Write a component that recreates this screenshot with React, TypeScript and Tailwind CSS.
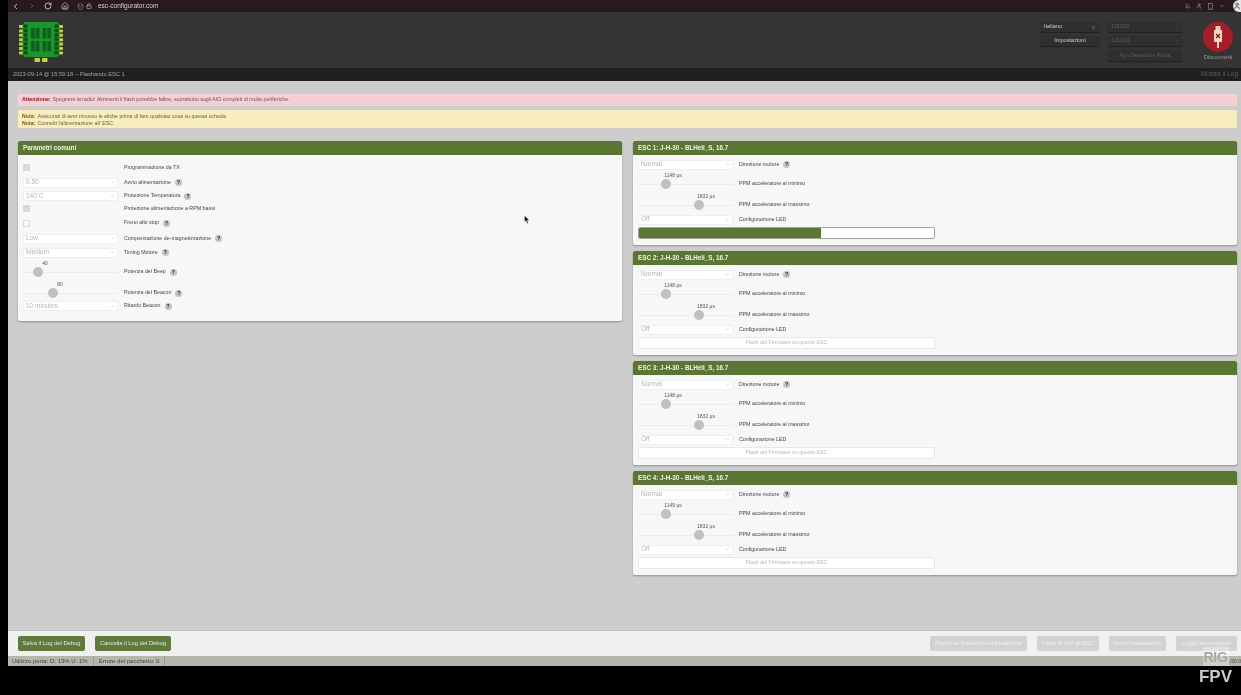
import { ChevronLeft, ChevronRight, RotateCw, Home, ShieldCheck, Lock, ChevronDown, ChevronsUpDown, User, Rss, Smartphone } from 'lucide-react';

function Help() {
  return (
    <span className="ml-[4px] inline-flex h-[7px] w-[7px] items-center justify-center rounded-full bg-[#c4c4c4] text-[5px] font-bold leading-none text-[#222]">?</span>
  );
}

function Select({ value }: { value: string }) {
  return (
    <div className="flex h-[10px] w-[95px] shrink-0 items-center justify-between rounded-[2px] border border-[#efefef] bg-white pl-[2px] pr-[2px] text-[6.5px] leading-none text-[#b5b5b5]">
      <span>{value}</span>
      <ChevronDown size={5} className="text-[#aaa]" />
    </div>
  );
}

function Check({ on }: { on: boolean }) {
  return (
    <div className="w-[95px] shrink-0">
      <div className={`flex h-[7px] w-[7px] items-center justify-center rounded-[1px] border border-[#dadada] ${on ? 'bg-[#d6d6d6]' : 'bg-[#f8f8f8]'}`}>
        {on && (
          <svg width="5" height="5" viewBox="0 0 5 5">
            <path d="M0.8 2.6 L2 3.8 L4.2 1.2" fill="none" stroke="#f2f2f2" strokeWidth="0.8" />
          </svg>
        )}
      </div>
    </div>
  );
}

function Row({ h, label, help, children }: { h: string; label: string; help?: boolean; children: React.ReactNode }) {
  return (
    <div className={`flex items-center gap-[6px] ${h}`}>
      {children}
      <span className="flex items-center whitespace-nowrap text-[5.3px] leading-none text-[#444]">
        {label}
        {help && <Help />}
      </span>
    </div>
  );
}

// slider with the value above the thumb
function Slider({ value, pos, label, help }: { value: string; pos: number; label: string; help?: boolean }) {
  return (
    <div className="flex h-[21px] gap-[6px]">
      <div className="w-[95px] shrink-0">
        <div className="relative h-[8px] text-[5px] leading-[9px] text-[#555]">
          <span className="absolute -translate-x-1/2 whitespace-nowrap" style={{ left: pos + 10 }}>{value}</span>
        </div>
        <div className="flex h-[10px] items-center">
          <div className="relative h-[1px] w-full bg-[#ececec]">
            <div className="absolute top-[-5px] h-[10px] w-[10px] rounded-full bg-[#c0c0c0]" style={{ left: pos - 2 }} />
          </div>
        </div>
      </div>
      <div className="flex h-[18px] items-end">
        <span className="flex h-[10px] items-center whitespace-nowrap text-[5.3px] leading-none text-[#444]">
          {label}
          {help && <Help />}
        </span>
      </div>
    </div>
  );
}

function Panel({ title, className, children }: { title: string; className?: string; children: React.ReactNode }) {
  return (
    <section className={`overflow-hidden rounded-[2px] bg-[#f7f7f7] shadow-[0_1px_2px_rgba(0,0,0,0.3)] ${className ?? ''}`}>
      <div className="flex h-[14px] items-center bg-[#597632] px-[5px] text-[6.3px] font-bold leading-none text-[#f2f2e8]">{title}</div>
      {children}
    </section>
  );
}

function EscPanel({ n, min, progress }: { n: number; min: string; progress?: boolean }) {
  return (
    <Panel title={`ESC ${n}: J-H-30 - BLHeli_S, 16.7`} className="h-[104px]">
      <div className="px-[5px] pt-[3px]">
        <Row h="h-[13px]" label="Direzione motore" help>
          <Select value="Normal" />
        </Row>
        <Slider value={min} pos={25} label="PPM acceleratore al minimo" />
        <Slider value="1832 µs" pos={58} label="PPM acceleratore al massimo" />
        <Row h="h-[13px]" label="Configurazione LED">
          <Select value="Off" />
        </Row>
        {progress ? (
          <div className="mt-[1px] h-[12px] w-[297px] overflow-hidden rounded-[2px] border border-[#a0a0a0] bg-white">
            <div className="h-full w-[182px] bg-[#597632]" />
          </div>
        ) : (
          <div className="mt-[1px] flex h-[12px] w-[297px] items-center justify-center rounded-[2px] border border-[#e8e8e8] bg-white text-[5.3px] leading-none text-[#b8b8b8]">
            Flash del Firmware su questo ESC
          </div>
        )}
      </div>
    </Panel>
  );
}

function GreenButton({ children, w }: { children: React.ReactNode; w: string }) {
  return (
    <div className={`flex h-[15px] items-center justify-center rounded-[2px] bg-[#5f7a3b] text-[5.8px] leading-none text-[#e8eadd] ${w}`}>{children}</div>
  );
}

function GreyButton({ children, w }: { children: React.ReactNode; w: string }) {
  return (
    <div className={`flex h-[15px] items-center justify-center rounded-[2px] bg-[#d2d2d2] text-[5.8px] leading-none text-[#f0f0f0] ${w}`}>{children}</div>
  );
}

function HeaderControl({ children, w, dim }: { children: React.ReactNode; w: string; dim?: boolean }) {
  return (
    <div className={`flex h-[10px] items-center justify-between rounded-[1px] bg-[#2f2f2f] px-[3px] text-[5.6px] leading-none shadow-[0_1px_1px_rgba(0,0,0,0.4)] ${dim ? 'text-[#5c5c5c]' : 'text-[#c9c9c9]'} ${w}`}>{children}</div>
  );
}

function Logo() {
  const pads = [0, 1, 2, 3, 4, 5, 6];
  return (
    <svg width="46" height="44" viewBox="0 0 46 44">
      <path d="M7 2 H39 L42 5 V34 L39 37 H7 L4 34 V5 Z" fill="#1c962a" />
      {pads.map((i) => (
        <g key={i}>
          <rect x="1" y={5 + i * 4.4} width="3.6" height="3" rx="0.8" fill="#c8d42c" />
          <rect x="41.4" y={5 + i * 4.4} width="3.6" height="3" rx="0.8" fill="#c8d42c" />
          <rect x="5.5" y={4.5 + i * 4.4} width="4" height="3.4" fill="#114a1c" />
          <rect x="36.5" y={4.5 + i * 4.4} width="4" height="3.4" fill="#114a1c" />
        </g>
      ))}
      {/* the four chips in the middle */}
      <rect x="13" y="8" width="8.5" height="10.5" fill="#0f5f20" />
      <rect x="24.5" y="8" width="8.5" height="10.5" fill="#0f5f20" />
      <rect x="13" y="21" width="8.5" height="10.5" fill="#0f5f20" />
      <rect x="24.5" y="21" width="8.5" height="10.5" fill="#0f5f20" />
      <path d="M17.2 8 V31.5 M28.8 8 V31.5" stroke="#1c962a" strokeWidth="1" />
      <rect x="16.5" y="38" width="5.5" height="4" rx="0.8" fill="#c8d42c" />
      <rect x="24" y="38" width="5.5" height="4" rx="0.8" fill="#c8d42c" />
    </svg>
  );
}

export default function App() {
  return (
    <div className="relative flex h-[695px] w-full overflow-hidden bg-black font-['Liberation_Sans',Arial,sans-serif] blur-[0.35px]">
      <div className="w-[8px] shrink-0 bg-black" />
      <div className="flex min-w-0 flex-1 flex-col">
        {/* browser bar */}
        <div className="flex h-[12px] items-center bg-[#291820] pl-[3px] pr-0 text-[#d5d0d2]">
          <ChevronLeft size={9} strokeWidth={2.5} />
          <ChevronRight size={8} className="ml-[8px] text-[#6f686b]" />
          <RotateCw size={8} strokeWidth={2.5} className="ml-[8px]" />
          <Home size={8} className="ml-[9px]" />
          <ShieldCheck size={7} className="ml-[8px] text-[#aaa]" />
          <Lock size={6} className="ml-[2px]" />
          <span className="ml-[6px] text-[6.5px] leading-none">esc-configurator.com</span>
          <div className="ml-auto flex items-center gap-[5px] text-[#aaa]">
            <Rss size={6} />
            <User size={6} />
            <Smartphone size={7} />
            <ChevronDown size={6} />
            <div className="ml-[3px] flex h-[12px] w-[8px] items-center justify-end overflow-hidden rounded-l-full bg-[#e6e6e6] text-[#333]">
              <User size={8} className="shrink-0" />
            </div>
          </div>
        </div>

        {/* header */}
        <header className="flex h-[56px] bg-[#343434] pl-[10px] pr-[1px]">
          <div className="pt-[8px]">
            <Logo />
          </div>
          <div className="ml-auto flex gap-[9px] pt-[10px]">
            <div className="flex flex-col gap-[4px]">
              <HeaderControl w="w-[58px]">
                Italiano
                <ChevronsUpDown size={5} />
              </HeaderControl>
              <HeaderControl w="w-[58px] !justify-center">Impostazioni</HeaderControl>
            </div>
            <div className="flex flex-col gap-[4px]">
              <HeaderControl w="w-[74px]" dim>
                115200
                <ChevronsUpDown size={5} />
              </HeaderControl>
              <HeaderControl w="w-[74px]" dim>
                115200
                <ChevronsUpDown size={5} />
              </HeaderControl>
              <HeaderControl w="w-[74px] !justify-center h-[11px]" dim>Apri Selezione Porta</HeaderControl>
            </div>
            <div className="ml-[5px] flex w-[44px] flex-col items-center">
              <div className="flex h-[30px] w-[30px] items-center justify-center rounded-full bg-[#a81c28]">
                <svg width="12" height="22" viewBox="0 0 12 22">
                  <rect x="3.5" y="0" width="5" height="4" fill="#d9d2b8" />
                  <rect x="2" y="4" width="8" height="12" rx="1" fill="#e8dfc4" />
                  <rect x="5" y="16" width="2" height="6" fill="#e8dfc4" />
                  <path d="M4 8 L8 12 M8 8 L4 12" stroke="#8c1420" strokeWidth="1.3" />
                </svg>
              </div>
              <span className="mt-[3px] text-[5.8px] leading-none text-[#9a9a9a]">Disconnetti</span>
            </div>
          </div>
        </header>

        {/* log bar */}
        <div className="flex h-[13px] items-center justify-between bg-[#1f1f1f] pl-[5px] pr-[3px] text-[5.7px] leading-none">
          <span className="text-[#a5a5a5]">2023-09-14 @ 15:59:18 -- Flashando ESC 1</span>
          <span className="text-[6.5px] text-[#5e5e5e]">Mostra il Log</span>
        </div>

        {/* content */}
        <main className="flex-1 bg-[#cdcdcd] pl-[10px] pr-[4px] pt-[13px]">
          <div className="flex h-[12px] items-center rounded-[1px] bg-[#f6ced4] px-[4px] text-[5.25px] leading-none text-[#6b5a5c]">
            <b className="mr-[2px] text-[#7a1620]">Attenzione:</b>
            Spegnere la radio! Altrimenti il flash potrebbe fallire, soprattutto sugli AIO completi di molte periferiche.
          </div>
          <div className="mt-[4px] flex h-[18px] flex-col justify-center gap-[1px] rounded-[1px] bg-[#f8edbd] px-[4px] text-[5.25px] leading-[6px] text-[#6a6448]">
            <div>
              <b className="mr-[2px] text-[#7a5a14]">Nota:</b>
              Assicurati di aver rimosso le eliche prima di fare qualsiasi cosa su questa scheda.
            </div>
            <div>
              <b className="mr-[2px] text-[#7a5a14]">Nota:</b>
              Connetti l'alimentazione all' ESC.
            </div>
          </div>

          <div className="mt-[13px] grid grid-cols-2 items-start gap-[11px]">
            <Panel title="Parametri comuni">
              <div className="px-[5px] pb-[10px] pt-[5px]">
                <Row h="h-[15px]" label="Programmazione da TX">
                  <Check on />
                </Row>
                <Row h="h-[15px]" label="Avvio alimentazione" help>
                  <Select value="0.50" />
                </Row>
                <Row h="h-[12px]" label="Protezione Temperatura" help>
                  <Select value="140 C" />
                </Row>
                <Row h="h-[13px]" label="Protezione alimentazione a RPM bassi">
                  <Check on />
                </Row>
                <Row h="h-[16px]" label="Freno allo stop" help>
                  <Check on={false} />
                </Row>
                <Row h="h-[15px]" label="Compensazione de-magnetizzazione" help>
                  <Select value="Low" />
                </Row>
                <Row h="h-[13px]" label="Timing Motore" help>
                  <Select value="Medium" />
                </Row>
                <Slider value="40" pos={12} label="Potenza del Beep" help />
                <Slider value="80" pos={27} label="Potenza del Beacon" help />
                <Row h="h-[10px]" label="Ritardo Beacon" help>
                  <Select value="10 minutes" />
                </Row>
              </div>
            </Panel>
            <div className="flex flex-col gap-[6px]">
              <EscPanel n={1} min="1148 µs" progress />
              <EscPanel n={2} min="1148 µs" />
              <EscPanel n={3} min="1148 µs" />
              <EscPanel n={4} min="1149 µs" />
            </div>
          </div>
        </main>

        {/* toolbar */}
        <div className="flex h-[26px] items-center gap-[10px] border-t border-[#c2c2c2] bg-[#f0f0f0] pl-[10px] pr-[4px]">
          <GreenButton w="w-[67px]">Salva il Log del Debug</GreenButton>
          <GreenButton w="w-[76px]">Cancella il Log del Debug</GreenButton>
          <div className="ml-auto flex gap-[10px]">
            <GreyButton w="w-[97px]">Ripristina Impostazioni Predefinite</GreyButton>
            <GreyButton w="w-[62px]">Flash di tutti gli ESC</GreyButton>
            <GreyButton w="w-[57px]">Scrivi Impostazioni</GreyButton>
            <GreyButton w="w-[61px]">Leggi Impostazioni</GreyButton>
          </div>
        </div>

        {/* status bar */}
        <div className="flex h-[10px] items-center justify-between bg-[#b6b7ac] text-[6px] leading-none text-[#444]">
          <div className="flex h-full items-center">
            <span className="flex h-full items-center border-r border-[#9a9a90] pl-[4px] pr-[5px]">Utilizzo porta: D: 13% U: 1%</span>
            <span className="flex h-full items-center border-r border-[#9a9a90] px-[5px]">Errore del pacchetto: 0</span>
          </div>
          <span className="whitespace-nowrap text-[5px]">/30.0</span>
        </div>
        <div className="h-[29px] shrink-0 bg-black" />
      </div>

      {/* mouse cursor */}
      <svg className="absolute left-[524px] top-[215px]" width="6" height="9" viewBox="0 0 6 9">
        <path d="M0.5 0.5 L0.5 7 L2 5.6 L3.2 8.4 L4.3 7.9 L3.1 5.2 L5.2 5.2 Z" fill="#111" stroke="#eee" strokeWidth="0.4" />
      </svg>

      {/* channel watermark */}
      <div className="absolute left-[1199px] top-[647px] flex w-[33px] flex-col items-center">
        <div className="flex h-[19px] w-[26px] items-center justify-center bg-white/35 text-[14px] font-bold leading-none tracking-tight text-[#a8a8a2]">RIG</div>
        <div className="mt-[2px] text-[17px] font-bold leading-none text-[#cbcbcb]">FPV</div>
      </div>
    </div>
  );
}
